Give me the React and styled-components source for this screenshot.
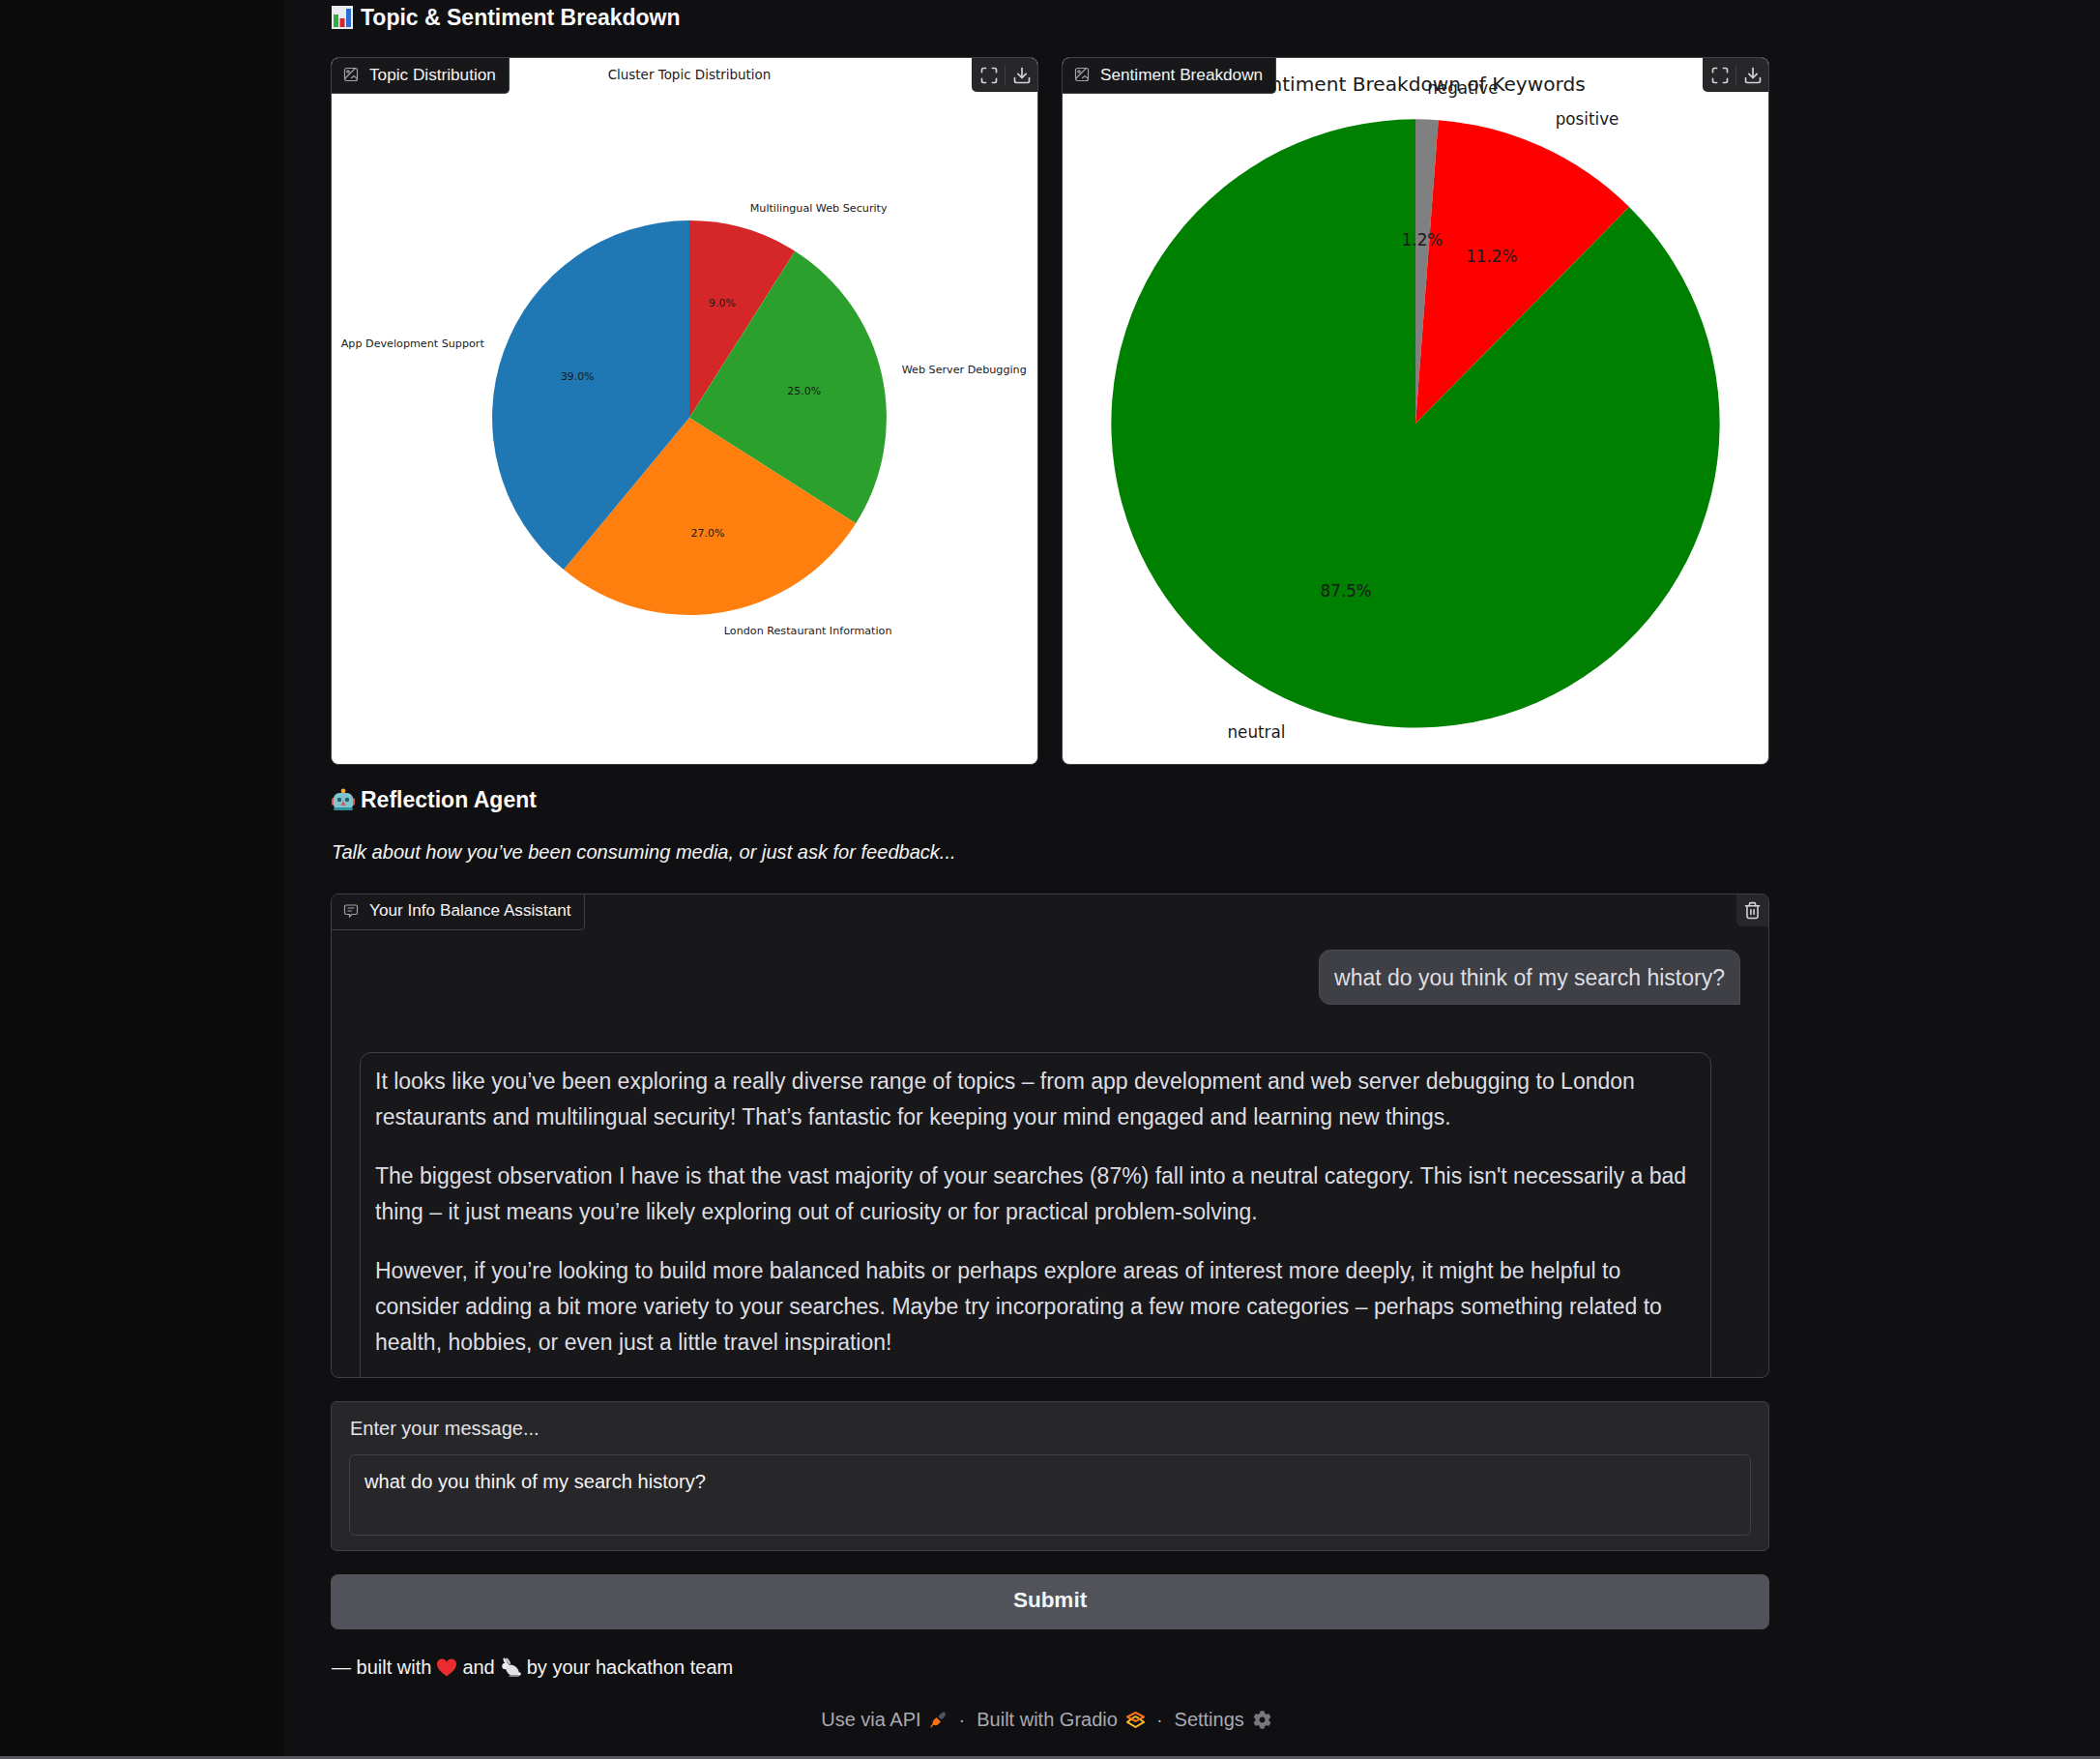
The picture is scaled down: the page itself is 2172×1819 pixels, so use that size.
import React from 'react';
import styled, { createGlobalStyle } from 'styled-components';
import { Maximize, Download, Trash2 } from 'lucide-react';
import { FaCog } from 'react-icons/fa';

const GlobalStyle = createGlobalStyle`
    html, body {
        margin: 0;
        padding: 0;
        background: #111113;
        font-family: "Liberation Sans", Arial, sans-serif;
    }
`

const topicSlices = [
    { value: 9, color: '#d62728' },
    { value: 25, color: '#2ca02c' },
    { value: 27, color: '#ff7f0e' },
    { value: 39, color: '#1f77b4' },
]

const sentimentSlices = [
    { value: 1.2, color: '#808080' },
    { value: 11.2, color: '#ff0000' },
    { value: 87.6, color: '#008000' },
]

// slices run clockwise from twelve o'clock, as the matplotlib charts do
const Pie = ({ cx, cy, r, slices }) => {
    let start = 0
    return slices.map((slice) => {
        const from = (start / 100) * Math.PI * 2
        start += slice.value
        const to = (start / 100) * Math.PI * 2
        const large = to - from > Math.PI ? 1 : 0
        const d = `M${cx} ${cy} L${cx + r * Math.sin(from)} ${cy - r * Math.cos(from)} A${r} ${r} 0 ${large} 1 ${cx + r * Math.sin(to)} ${cy - r * Math.cos(to)} Z`
        return <path key={slice.color} d={d} fill={slice.color} />
    })
}

const ImageGlyph = () => (
    <svg width="16" height="16" viewBox="0 0 16 16" fill="none" stroke="#a1a1aa" strokeWidth="1.2">
        <rect x="1.5" y="1.5" width="13" height="13" rx="2" />
        <path d="M1.5 12.5 L12.5 1.5" />
        <circle cx="5" cy="5" r="1.2" />
        <path d="M8 12 L11 9.5 L14 12" />
    </svg>
)

const ChatGlyph = () => (
    <svg width="16" height="16" viewBox="0 0 16 16" fill="none" stroke="#a1a1aa" strokeWidth="1.2">
        <path d="M3 2 H13 A1.5 1.5 0 0 1 14.5 3.5 V10 A1.5 1.5 0 0 1 13 11.5 H9 L6.5 14 V11.5 H3 A1.5 1.5 0 0 1 1.5 10 V3.5 A1.5 1.5 0 0 1 3 2 Z" />
        <path d="M4.5 5 H11.5 M4.5 8 H9" />
    </svg>
)

const ChartEmoji = () => (
    <svg width="22" height="24" viewBox="0 0 22 24">
        <rect width="22" height="24" fill="#e9edf2" />
        <rect x="2" y="9" width="5" height="13" fill="#2fae3c" />
        <rect x="8.5" y="13" width="5" height="9" fill="#d8232a" />
        <rect x="15" y="3" width="5" height="19" fill="#2a6fd0" />
    </svg>
)

const RobotEmoji = () => (
    <svg width="24" height="24" viewBox="0 0 24 24">
        <circle cx="12" cy="3" r="2.4" fill="#f5a623" />
        <rect x="0" y="10" width="4" height="8" rx="2" fill="#e0565b" />
        <rect x="20" y="10" width="4" height="8" rx="2" fill="#e0565b" />
        <rect x="2" y="5" width="20" height="18" rx="6" fill="#7fc4cf" />
        <circle cx="8" cy="12" r="2.2" fill="#2b5d6b" />
        <circle cx="16" cy="12" r="2.2" fill="#2b5d6b" />
        <path d="M12 13 L14.5 18 H9.5 Z" fill="#e0565b" />
        <rect x="2" y="20" width="20" height="3" rx="1.5" fill="#2f8f9c" />
    </svg>
)

const HeartEmoji = () => (
    <svg width="20" height="19" viewBox="0 0 20 19">
        <path d="M10 18.5 C4 14 0 10.5 0 5.8 C0 2.5 2.5 0.5 5.2 0.5 C7.2 0.5 9 1.6 10 3.4 C11 1.6 12.8 0.5 14.8 0.5 C17.5 0.5 20 2.5 20 5.8 C20 10.5 16 14 10 18.5 Z" fill="#ea2b2f" />
    </svg>
)

const RabbitEmoji = () => (
    <svg width="21" height="21" viewBox="0 0 21 21">
        <ellipse cx="7.5" cy="3.8" rx="1.5" ry="3.8" transform="rotate(-35 7.5 3.8)" fill="#c9bfc2" />
        <ellipse cx="4.5" cy="3.8" rx="1.4" ry="3.6" transform="rotate(-25 4.5 3.8)" fill="#e6e6ea" />
        <ellipse cx="5" cy="9" rx="3.8" ry="3.2" fill="#ececf0" />
        <ellipse cx="12" cy="13.5" rx="7.2" ry="5.2" transform="rotate(35 12 13.5)" fill="#e2e2e6" />
        <circle cx="19" cy="17" r="1.8" fill="#f4f4f6" />
        <path d="M8 20 H19 L18 18 H10 Z" fill="#8d8d94" />
    </svg>
)

const PlugIcon = () => (
    <svg width="18" height="20" viewBox="0 0 18 20">
        <path d="M10 5 L14 2 L16.5 4.5 L13.5 9 L11 10 L8.5 7.5 Z" fill="#4b5563" />
        <path d="M3.5 11 L6.5 8 L11 12.5 L8 15.5 C6.5 16.5 5 16.5 3.5 15.5 L1 19 L0.5 17.5 L2.5 14.5 C2.5 13 2.7 12 3.5 11 Z" fill="#f97316" />
    </svg>
)

const GradioIcon = () => (
    <svg width="19" height="17" viewBox="0 0 19 17" fill="none" strokeWidth="2" strokeLinejoin="round">
        <path d="M9.5 1 L18 5.5 L9.5 10 L1 5.5 Z" stroke="#f97316" />
        <path d="M5 8 L1 10.8 L9.5 16 L18 10.8 L14 8" stroke="#fbbf24" />
        <path d="M6 7 L9.5 5 L13 7" stroke="#fbbf24" />
    </svg>
)

const App = () => {
    return (
        <Backdrop>
            <GlobalStyle />
            <Page>
                <Column>
                    <SectionTitle>
                        <ChartEmoji />
                        Topic &amp; Sentiment Breakdown
                    </SectionTitle>

                    <PanelRow>
                        <Panel>
                            <ChartSvg viewBox="0 0 732 732">
                                <Pie cx={371} cy={373} r={204.5} slices={topicSlices} />
                                <ChartText x={371} y={18} size={13.5}>Cluster Topic Distribution</ChartText>
                                <ChartText x={505} y={155.5} size={11.2}>Multilingual Web Security</ChartText>
                                <ChartText x={656} y={323} size={11.2}>Web Server Debugging</ChartText>
                                <ChartText x={84} y={296} size={11.2}>App Development Support</ChartText>
                                <ChartText x={494} y={594.5} size={11.2}>London Restaurant Information</ChartText>
                                <ChartText x={405} y={254} size={11}>9.0%</ChartText>
                                <ChartText x={490} y={345} size={11}>25.0%</ChartText>
                                <ChartText x={390} y={493} size={11}>27.0%</ChartText>
                                <ChartText x={255} y={330} size={11}>39.0%</ChartText>
                            </ChartSvg>
                            <PanelLabel>
                                <ImageGlyph />
                                Topic Distribution
                            </PanelLabel>
                            <PanelTools>
                                <ToolButton><Maximize size={20} /></ToolButton>
                                <ToolDivider />
                                <ToolButton><Download size={20} /></ToolButton>
                            </PanelTools>
                        </Panel>

                        <Panel>
                            <ChartSvg viewBox="0 0 732 732">
                                <Pie cx={366} cy={379} r={315.5} slices={sentimentSlices} />
                                <ChartText x={366} y={27} size={20.2}>Sentiment Breakdown of Keywords</ChartText>
                                <ChartText x={415} y={31} size={16.8}>negative</ChartText>
                                <ChartText x={544} y={63} size={16.8}>positive</ChartText>
                                <ChartText x={201} y={699} size={16.8}>neutral</ChartText>
                                <ChartText x={373} y={189} size={16.8}>1.2%</ChartText>
                                <ChartText x={445} y={206} size={16.8}>11.2%</ChartText>
                                <ChartText x={294} y={553} size={16.8}>87.5%</ChartText>
                            </ChartSvg>
                            <PanelLabel>
                                <ImageGlyph />
                                Sentiment Breakdown
                            </PanelLabel>
                            <PanelTools>
                                <ToolButton><Maximize size={20} /></ToolButton>
                                <ToolDivider />
                                <ToolButton><Download size={20} /></ToolButton>
                            </PanelTools>
                        </Panel>
                    </PanelRow>

                    <AgentTitle>
                        <RobotEmoji />
                        Reflection Agent
                    </AgentTitle>
                    <Intro>Talk about how you’ve been consuming media, or just ask for feedback...</Intro>

                    <ChatPanel>
                        <ChatLabel>
                            <ChatGlyph />
                            Your Info Balance Assistant
                        </ChatLabel>
                        <ClearButton><Trash2 size={19} /></ClearButton>
                        <Messages>
                            <UserBubble>what do you think of my search history?</UserBubble>
                            <BotBubble>
                                <p>It looks like you’ve been exploring a really diverse range of topics – from app development and web server debugging to London restaurants and multilingual security! That’s fantastic for keeping your mind engaged and learning new things.</p>
                                <p>The biggest observation I have is that the vast majority of your searches (87%) fall into a neutral category. This isn't necessarily a bad thing – it just means you’re likely exploring out of curiosity or for practical problem-solving.</p>
                                <p>However, if you’re looking to build more balanced habits or perhaps explore areas of interest more deeply, it might be helpful to consider adding a bit more variety to your searches. Maybe try incorporating a few more categories – perhaps something related to health, hobbies, or even just a little travel inspiration!</p>
                            </BotBubble>
                        </Messages>
                    </ChatPanel>

                    <InputBlock>
                        <InputLabel>Enter your message...</InputLabel>
                        <MessageBox readOnly rows={2} defaultValue="what do you think of my search history?" />
                    </InputBlock>

                    <SubmitButton>Submit</SubmitButton>

                    <Credit>
                        — built with <HeartEmoji /> and <RabbitEmoji /> by your hackathon team
                    </Credit>

                    <FooterLinks>
                        <span>Use via API</span>
                        <PlugIcon />
                        <Dot>·</Dot>
                        <span>Built with Gradio</span>
                        <GradioIcon />
                        <Dot>·</Dot>
                        <span>Settings</span>
                        <FaCog size={19} color="#77777d" />
                    </FooterLinks>
                </Column>
            </Page>
        </Backdrop>
    );
}

const Backdrop = styled.div`
    box-sizing: border-box;
    height: 1819px;
    background: linear-gradient(90deg, #0b0b0c 294px, #111113 294px);
    border-bottom: 3px solid #56565c;
    overflow: hidden;
`

const Page = styled.div`
    box-sizing: border-box;
    width: 1582px;
    height: 100%;
    margin-left: 294px;
    padding-left: 48px;
    background: #101012;
`

const Column = styled.div`
    width: 1488px;
    display: flex;
    flex-direction: column;
`

const SectionTitle = styled.h2`
    display: flex;
    align-items: center;
    gap: 8px;
    height: 36px;
    margin: 0 0 23px;
    padding-left: 1px;
    font-size: 23px;
    font-weight: 700;
    color: #fafafa;
`

const AgentTitle = styled(SectionTitle)`
    margin: 18px 0 0;
    gap: 6px;
`

const Intro = styled.p`
    margin: 22px 0 0;
    padding-left: 1px;
    height: 28px;
    line-height: 28px;
    font-size: 20.06px;
    font-style: italic;
    color: #f4f4f5;
`

const PanelRow = styled.div`
    display: grid;
    grid-template-columns: 1fr 1fr;
    gap: 24px;
`

const Panel = styled.div`
    position: relative;
    box-sizing: border-box;
    height: 732px;
    background: #fff;
    border: 1px solid #3f3f46;
    border-radius: 8px;
    overflow: hidden;
`

const ChartSvg = styled.svg`
    display: block;
    width: 100%;
    height: 100%;
`

const ChartText = styled.text.attrs({ textAnchor: 'middle', dominantBaseline: 'central' })`
    font-family: "DejaVu Sans", sans-serif;
    font-size: ${(props) => props.size}px;
    fill: #1a1a1a;
`

const PanelLabel = styled.div`
    position: absolute;
    top: 0;
    left: 0;
    box-sizing: border-box;
    display: flex;
    align-items: center;
    gap: 11px;
    height: 37px;
    padding: 0 13px 2px 12px;
    background: #18181b;
    border-right: 1px solid #3f3f46;
    border-bottom: 1px solid #3f3f46;
    border-bottom-right-radius: 5px;
    font-size: 17.2px;
    color: #f4f4f5;
`

const PanelTools = styled.div`
    position: absolute;
    top: 0;
    right: 0;
    display: flex;
    align-items: center;
    height: 35px;
    padding: 0 3px 0 4px;
    background: #27272a;
    border-bottom-left-radius: 5px;
`

const ToolButton = styled.span`
    display: flex;
    align-items: center;
    justify-content: center;
    width: 27px;
    color: #d4d4d8;
`

const ToolDivider = styled.span`
    width: 1px;
    height: 20px;
    margin: 0 3px;
    background: #3f3f46;
`

const ChatPanel = styled.div`
    position: relative;
    box-sizing: border-box;
    height: 501px;
    margin-top: 29px;
    background: #18181b;
    border: 1px solid #3f3f46;
    border-radius: 8px;
    overflow: hidden;
`

const ChatLabel = styled(PanelLabel)`
    padding-bottom: 3px;
`

const ClearButton = styled.span`
    position: absolute;
    top: 0;
    right: 0;
    display: flex;
    align-items: center;
    justify-content: center;
    width: 33px;
    height: 33px;
    background: #27272a;
    border-bottom-left-radius: 5px;
    color: #d4d4d8;
`

const Messages = styled.div`
    display: flex;
    flex-direction: column;
    padding: 57px 29px 0 29px;
`

const UserBubble = styled.div`
    align-self: flex-end;
    box-sizing: border-box;
    height: 57px;
    padding: 0 15px;
    line-height: 57px;
    font-size: 23px;
    color: #dedee2;
    background: #3f3f46;
    border: 1px solid #4a4a52;
    border-radius: 12px 12px 0 12px;
`

const BotBubble = styled.div`
    box-sizing: border-box;
    width: 1398px;
    margin: 49px 0 0;
    padding: 11px 15px 20px;
    font-size: 23px;
    line-height: 37.4px;
    color: #dedee2;
    border: 1px solid #3f3f46;
    border-radius: 12px;

    p {
        margin: 0 0 23px;
    }
`

const InputBlock = styled.div`
    box-sizing: border-box;
    height: 155px;
    margin-top: 24px;
    padding: 13px 18px 0;
    background: #27272a;
    border: 1px solid #3f3f46;
    border-radius: 6px;
`

const InputLabel = styled.div`
    height: 28px;
    padding-left: 1px;
    line-height: 28px;
    font-size: 20px;
    color: #e4e4e7;
`

const MessageBox = styled.textarea`
    display: block;
    box-sizing: border-box;
    width: 100%;
    height: 84px;
    margin-top: 13px;
    padding: 13px 15px;
    font-family: inherit;
    font-size: 20.1px;
    line-height: 28px;
    color: #f4f4f5;
    background: #27272a;
    border: 1px solid #3f3f46;
    border-radius: 6px;
    outline: none;
    resize: none;
    overflow: hidden;
`

const SubmitButton = styled.button`
    height: 57px;
    margin-top: 24px;
    padding: 0 0 3px;
    font-family: inherit;
    font-size: 22.5px;
    font-weight: 700;
    color: #f4f4f5;
    background: #52525b;
    border: none;
    border-radius: 8px;
`

const Credit = styled.div`
    display: flex;
    align-items: center;
    gap: 6px;
    height: 28px;
    margin-top: 25px;
    padding-left: 1px;
    font-size: 20px;
    color: #f4f4f5;
`

const FooterLinks = styled.div`
    display: flex;
    align-items: center;
    justify-content: center;
    gap: 9px;
    height: 28px;
    margin-top: 26px;
    padding-right: 8px;
    font-size: 20px;
    color: #a9a9b0;
`

const Dot = styled.span`
    margin: 0 3px;
`

export default App;
